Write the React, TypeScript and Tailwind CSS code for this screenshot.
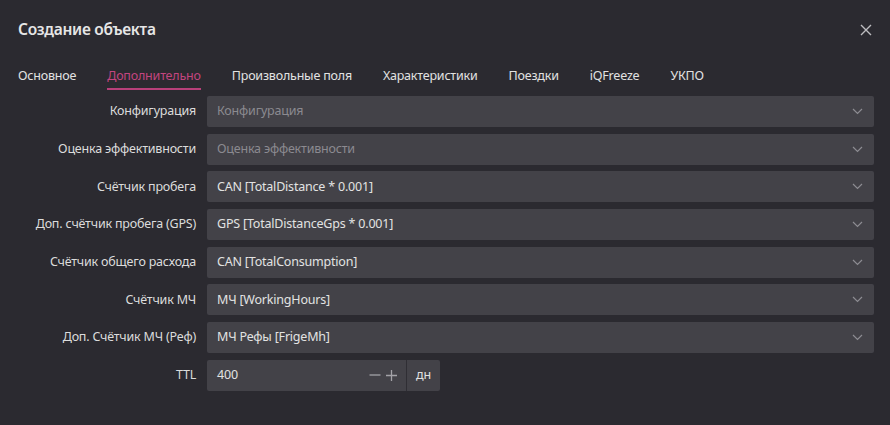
import React from "react";

const tabs = ["Основное", "Дополнительно", "Произвольные поля", "Характеристики", "Поездки", "iQFreeze", "УКПО"];

const rows: { label: string; value: string; placeholder?: boolean }[] = [
  { label: "Конфигурация", value: "Конфигурация", placeholder: true },
  { label: "Оценка эффективности", value: "Оценка эффективности", placeholder: true },
  { label: "Счётчик пробега", value: "CAN [TotalDistance * 0.001]" },
  { label: "Доп. счётчик пробега (GPS)", value: "GPS [TotalDistanceGps * 0.001]" },
  { label: "Счётчик общего расхода", value: "CAN [TotalConsumption]" },
  { label: "Счётчик МЧ", value: "МЧ [WorkingHours]" },
  { label: "Доп. Счётчик МЧ (Реф)", value: "МЧ Рефы [FrigeMh]" },
];

function Chevron() {
  return (
    <svg width="11" height="7" viewBox="0 0 11 7" fill="none">
      <path d="M1 1l4.5 4.5L10 1" stroke="#8d8c92" strokeWidth="1.2" />
    </svg>
  );
}

export default function App() {
  return (
    <div
      className="w-[890px] h-[425px] bg-[#2b2a30] text-[#dcdcdc] overflow-hidden"
      style={{ fontFamily: '"Noto Sans", "Open Sans", sans-serif' }}
    >
      <div className="h-[60px] px-[18px] flex items-center justify-between">
        <div className="text-[15.5px] tracking-[-0.3px] font-semibold text-[#e6e6e6]">Создание объекта</div>
        <svg width="12" height="12" viewBox="0 0 12 12">
          <path d="M1 1l10 10M11 1L1 11" stroke="#bdbdc0" strokeWidth="1.4" />
        </svg>
      </div>
      <div className="mt-[7px] px-[18px] flex gap-[31px] text-[12.5px] tracking-[-0.2px] leading-[18px]">
        {tabs.map((t, i) => (
          <div
            key={t}
            className={
              i === 1
                ? "pb-[3px] border-b-2 border-[#b8407a] text-[#c2457f]"
                : "pb-[3px] border-b-2 border-transparent text-[#e2e2e2]"
            }
          >
            {t}
          </div>
        ))}
      </div>
      <div className="mt-[6px] pr-[16px] flex flex-col gap-[6.7px] text-[12.5px] tracking-[-0.2px]">
        {rows.map((r) => (
          <div key={r.label} className="flex items-center h-[31px]">
            <div className="w-[196px] text-right text-[#dcdcdc] mr-[11px]">{r.label}</div>
            <div className="flex-1 h-full bg-[#434248] rounded-[2px] flex items-center justify-between pl-[10px] pr-[11px]">
              <span className={r.placeholder ? "text-[#8b8a90]" : "text-[#e2e2e2]"}>{r.value}</span>
              <Chevron />
            </div>
          </div>
        ))}
        <div className="flex items-center h-[31px]">
          <div className="w-[196px] text-right text-[#dcdcdc] mr-[11px]">TTL</div>
          <div className="w-[233px] h-full bg-[#434248] rounded-[2px] flex items-center">
            <div className="flex-1 flex items-center pl-[10px] pr-[9px]">
              <span className="flex-1 text-[#e2e2e2]">400</span>
              <svg width="12" height="12" viewBox="0 0 12 12" className="mr-[5px]">
                <path d="M0.5 6h11" stroke="#a3a2a7" strokeWidth="1.3" />
              </svg>
              <svg width="11" height="11" viewBox="0 0 11 11">
                <path d="M0 5.5h11M5.5 0v11" stroke="#a3a2a7" strokeWidth="1.3" />
              </svg>
            </div>
            <div className="w-[1px] h-full bg-[#2f2e34]" />
            <div className="w-[33px] text-center text-[#e2e2e2]">дн</div>
          </div>
        </div>
      </div>
    </div>
  );
}
